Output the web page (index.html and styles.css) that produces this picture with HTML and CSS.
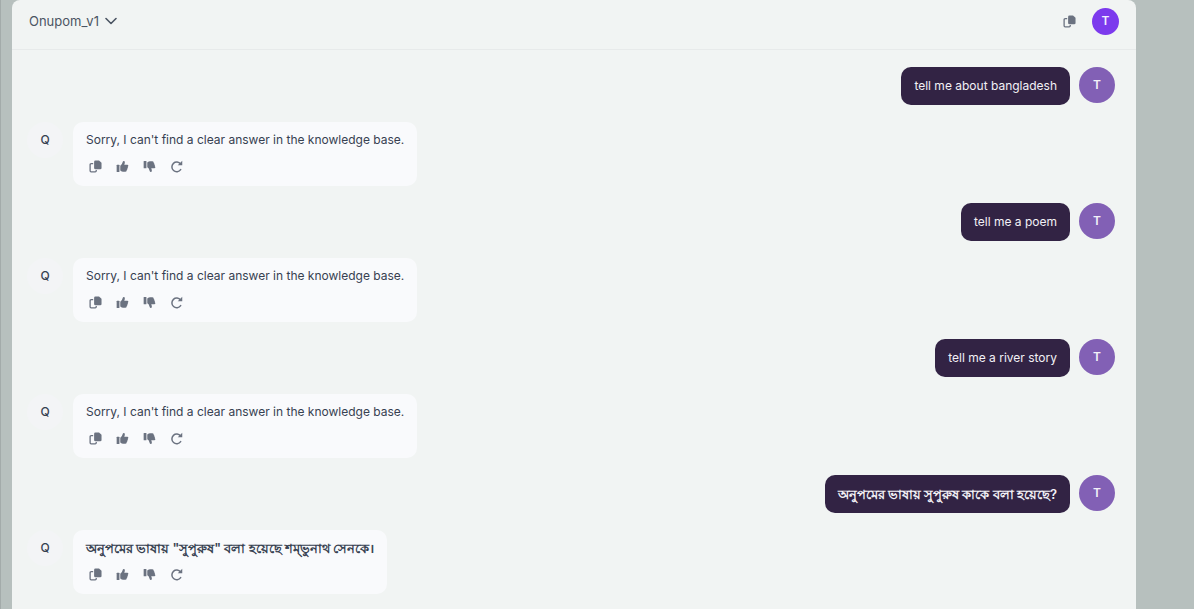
FILE: index.html
```html
<!DOCTYPE html>
<html lang="en">
<head>
<meta charset="utf-8">
<meta name="viewport" content="width=device-width, initial-scale=1">
<title>Onupom_v1</title>
<link rel="stylesheet" href="styles.css">
</head>
<body>
<svg class="sprite" aria-hidden="true">
  <symbol id="copy" viewBox="0 0 14 14"><path d="M4.500 4H2.300Q1.200 4 1.200 5.100V11.700Q1.200 12.800 2.300 12.800H6.700Q7.800 12.800 7.800 11.700V10.800" fill="none" stroke="currentColor" stroke-width="1.400"/><path d="M7 .5H10.800L13.500 3V8.500Q13.500 10 12 10H7Q5.500 10 5.500 8.500V2Q5.500 .5 7 .5Z" fill="currentColor"/></symbol>
  <symbol id="thumb" viewBox="0 0 14 14"><rect x=".7" y="5" width="3" height="8" rx=".6" fill="currentColor"/><path d="M4.600 6.200Q6.600 5.100 7.100 2.500Q7.400 1 8.500 1Q9.900 1.100 9.500 3.100L8.900 5.100H12.100Q13.300 5.200 13.300 6.300Q13.300 7 12.700 7.400Q13.200 8.200 12.300 9.200Q12.600 10.200 11.600 10.900Q11.700 12.500 10.200 12.600H7.600Q6.300 12.600 4.600 11.300Z" fill="currentColor"/></symbol>
  <symbol id="retry" viewBox="0 0 14 14"><path d="M11.400 4.300A5.200 5.200 0 1 0 11.500 10.400" fill="none" stroke="currentColor" stroke-width="1.600" stroke-linecap="round"/><path d="M13.200 .8V5.700H8.300Z" fill="currentColor"/></symbol>
</svg>
<main class="panel">
  <header class="topbar">
    <button class="model" type="button">Onupom_v1
      <svg class="chevron" viewBox="0 0 12 8" aria-hidden="true"><path d="M1 1.500L6 6.500L11 1.500"/></svg>
    </button>
    <div class="account">
      <button class="icon" type="button" aria-label="Copy conversation"><svg viewBox="0 0 14 14"><use href="#copy"/></svg></button>
      <button class="profile" type="button" aria-label="Profile">T</button>
    </div>
  </header>
  <section class="chat">
    <div class="row user"><p class="bubble">tell me about bangladesh</p><span class="avatar">T</span></div>
    <div class="row bot"><span class="avatar">Q</span><div class="bubble"><p class="answer">Sorry, I can't find a clear answer in the knowledge base.</p>
      <div class="actions">
        <button class="icon" type="button" aria-label="Copy"><svg viewBox="0 0 14 14"><use href="#copy"/></svg></button>
        <button class="icon" type="button" aria-label="Like"><svg viewBox="0 0 14 14"><use href="#thumb"/></svg></button>
        <button class="icon down" type="button" aria-label="Dislike"><svg viewBox="0 0 14 14"><use href="#thumb"/></svg></button>
        <button class="icon" type="button" aria-label="Retry"><svg viewBox="0 0 14 14"><use href="#retry"/></svg></button>
      </div></div></div>
    <div class="row user"><p class="bubble">tell me a poem</p><span class="avatar">T</span></div>
    <div class="row bot"><span class="avatar">Q</span><div class="bubble"><p class="answer">Sorry, I can't find a clear answer in the knowledge base.</p>
      <div class="actions">
        <button class="icon" type="button" aria-label="Copy"><svg viewBox="0 0 14 14"><use href="#copy"/></svg></button>
        <button class="icon" type="button" aria-label="Like"><svg viewBox="0 0 14 14"><use href="#thumb"/></svg></button>
        <button class="icon down" type="button" aria-label="Dislike"><svg viewBox="0 0 14 14"><use href="#thumb"/></svg></button>
        <button class="icon" type="button" aria-label="Retry"><svg viewBox="0 0 14 14"><use href="#retry"/></svg></button>
      </div></div></div>
    <div class="row user"><p class="bubble">tell me a river story</p><span class="avatar">T</span></div>
    <div class="row bot"><span class="avatar">Q</span><div class="bubble"><p class="answer">Sorry, I can't find a clear answer in the knowledge base.</p>
      <div class="actions">
        <button class="icon" type="button" aria-label="Copy"><svg viewBox="0 0 14 14"><use href="#copy"/></svg></button>
        <button class="icon" type="button" aria-label="Like"><svg viewBox="0 0 14 14"><use href="#thumb"/></svg></button>
        <button class="icon down" type="button" aria-label="Dislike"><svg viewBox="0 0 14 14"><use href="#thumb"/></svg></button>
        <button class="icon" type="button" aria-label="Retry"><svg viewBox="0 0 14 14"><use href="#retry"/></svg></button>
      </div></div></div>
    <div class="row user"><p class="bubble" lang="bn">অনুপমের ভাষায় সুপুরুষ কাকে বলা হয়েছে?</p><span class="avatar">T</span></div>
    <div class="row bot"><span class="avatar">Q</span><div class="bubble"><p class="answer" lang="bn">অনুপমের ভাষায় "সুপুরুষ" বলা হয়েছে শম্&zwnj;ভুনাথ সেনকে।</p>
      <div class="actions">
        <button class="icon" type="button" aria-label="Copy"><svg viewBox="0 0 14 14"><use href="#copy"/></svg></button>
        <button class="icon" type="button" aria-label="Like"><svg viewBox="0 0 14 14"><use href="#thumb"/></svg></button>
        <button class="icon down" type="button" aria-label="Dislike"><svg viewBox="0 0 14 14"><use href="#thumb"/></svg></button>
        <button class="icon" type="button" aria-label="Retry"><svg viewBox="0 0 14 14"><use href="#retry"/></svg></button>
      </div></div></div>
  </section>
</main>
</body>
</html>
```
FILE: styles.css
```css
* { box-sizing: border-box; }
body {
  margin: 0;
  min-height: 100vh;
  padding: 0 58px 0 11px;
  border-left: 1px solid #a3abaa;
  background: #b7c0be;
  color: #374151;
  font: 400 12px/20px Inter, "Noto Sans", sans-serif;
}
p { margin: 0; }
button {
  margin: 0;
  padding: 0;
  border: 0;
  background: none;
  color: inherit;
  font: inherit;
  cursor: pointer;
}
.sprite { display: none; }
.panel {
  min-height: 100vh;
  border-radius: 8px 8px 0 0;
  background: #f1f4f3;
}
.topbar {
  display: flex;
  align-items: center;
  justify-content: space-between;
  height: 50px;
  padding: 0 17px 7px;
  border-bottom: 1px solid #e7eaea;
}
.model {
  display: flex;
  align-items: center;
  gap: 6px;
  color: #4b5563;
  font-size: 13px;
}
.chevron {
  width: 12px;
  height: 8px;
  fill: none;
  stroke: currentColor;
  stroke-width: 1.6;
  stroke-linecap: round;
  stroke-linejoin: round;
}
.account { display: flex; align-items: center; gap: 16px; }
.icon { display: flex; color: #6b7280; }
.icon svg { width: 13px; height: 13px; }
.down svg { transform: scaleY(-1); }
.profile {
  width: 27px;
  height: 27px;
  border-radius: 50%;
  background: #7c3aed;
  color: #f3f0ff;
  font-weight: 600;
}
.chat {
  display: flex;
  flex-direction: column;
  gap: 17px;
  padding: 17px 21px 14px 15px;
}
.row { display: flex; align-items: flex-start; }
.user { justify-content: flex-end; gap: 9px; }
.bot { gap: 10px; }
.avatar {
  display: flex;
  flex: none;
  align-items: center;
  justify-content: center;
  width: 36px;
  height: 36px;
  border-radius: 50%;
}
.user .avatar { background: #8260b5; color: #f3f0f9; font-weight: 600; }
.bot .avatar { background: #f3f4f6; font-weight: 500; }
.bubble { border-radius: 10px; }
.user .bubble {
  padding: 9px 13px;
  background: #322344;
  color: #f3f1f6;
}
.bot .bubble { padding: 8px 13px 13px; background: #f9fafc; }
.answer { color: #374151; }
.bubble:lang(bn), .answer:lang(bn) { font-size: 13px; font-weight: 600; }
.actions { display: flex; gap: 14px; padding: 10px 3px 0; }
```
